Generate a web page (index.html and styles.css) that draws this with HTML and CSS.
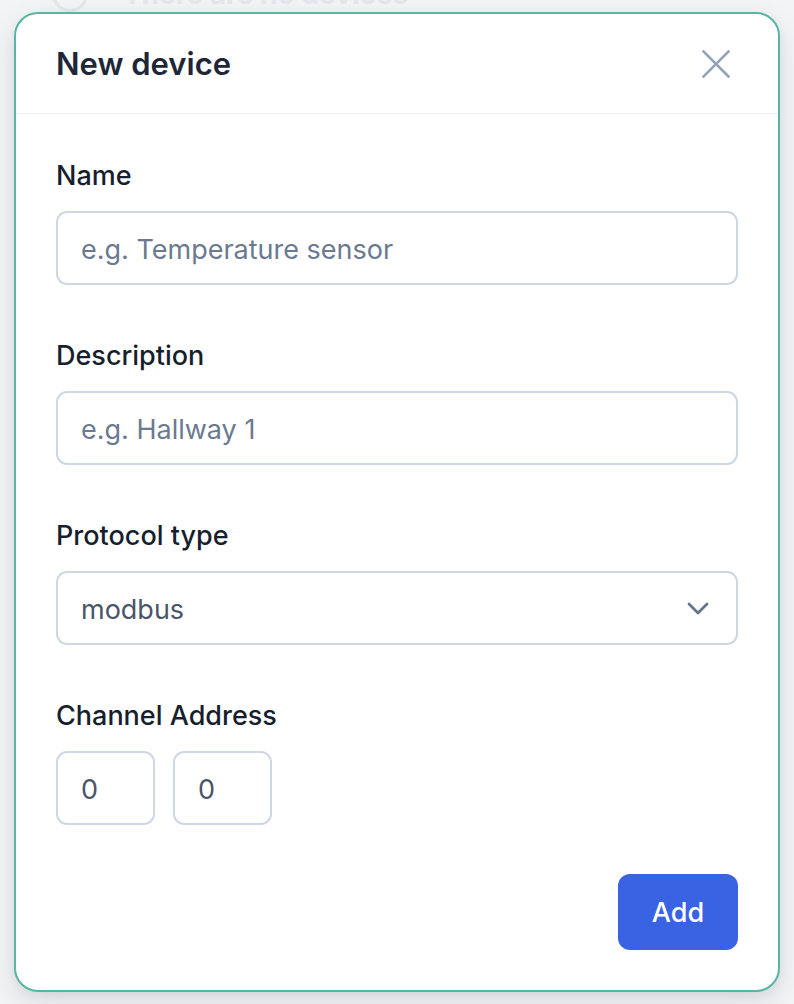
FILE: index.html
```html
<!DOCTYPE html>
<html lang="en">
<head>
<meta charset="utf-8">
<title>New device</title>
<link rel="stylesheet" href="styles.css">
</head>
<body>
<div class="backdrop-content">
  <span class="empty-icon"></span>
  <span class="empty-text">There are no devices</span>
</div>
<div class="modal">
  <header class="modal-header">
    <h2 class="modal-title">New device</h2>
    <button class="close-btn" aria-label="Close">
      <svg width="28" height="28" viewBox="0 0 28 28" fill="none" stroke="#94a3b8" stroke-width="2.6" stroke-linecap="square">
        <path d="M1.5 1.5 L26.5 26.5 M26.5 1.5 L1.5 26.5"/>
      </svg>
    </button>
  </header>
  <div class="modal-body">
    <div class="field">
      <label class="label">Name</label>
      <div class="input placeholder">e.g. Temperature sensor</div>
    </div>
    <div class="field">
      <label class="label">Description</label>
      <div class="input placeholder">e.g. Hallway 1</div>
    </div>
    <div class="field">
      <label class="label">Protocol type</label>
      <div class="input select">
        <span>modbus</span>
        <svg class="chevron" width="22" height="13" viewBox="0 0 22 13" fill="none" stroke="#64748b" stroke-width="2.8" stroke-linecap="round" stroke-linejoin="round">
          <path d="M2 2 L11 11 L20 2"/>
        </svg>
      </div>
    </div>
    <div class="field last">
      <label class="label">Channel Address</label>
      <div class="address-row">
        <div class="input small">0</div>
        <div class="input small">0</div>
      </div>
    </div>
    <div class="footer">
      <button class="add-btn">Add</button>
    </div>
  </div>
</div>
</body>
</html>
```

FILE: styles.css
```css
html, body {
  margin: 0;
  padding: 0;
}
body {
  width: 794px;
  height: 1004px;
  background: #f3f4f6;
  font-family: Inter, "Noto Sans", "Liberation Sans", sans-serif;
  position: relative;
  overflow: hidden;
}
.backdrop-content {
  position: absolute;
  left: 52px;
  top: -24px;
  display: flex;
  align-items: center;
  gap: 35px;
}
.empty-icon {
  width: 30px;
  height: 30px;
  border: 3px solid #e4e7eb;
  border-radius: 50%;
}
.empty-text {
  font-size: 28px;
  font-weight: 700;
  color: #e4e7eb;
}
.modal {
  position: relative;
  margin: 12px 14px 0 14px;
  width: 766px;
  height: 980px;
  box-sizing: border-box;
  background: #ffffff;
  border: 2px solid #55b6a3;
  border-radius: 24px;
  box-shadow: 0 10px 30px rgba(15, 23, 42, 0.10), 0 4px 10px rgba(15, 23, 42, 0.05);
  display: flex;
  flex-direction: column;
}
.modal-header {
  height: 99px;
  border-bottom: 1px solid #eef2f6;
  display: flex;
  align-items: center;
  justify-content: space-between;
  padding: 0 48px 0 40px;
}
.modal-title {
  margin: 0;
  font-size: 31px;
  font-weight: 600;
  color: #1e2738;
}
.close-btn {
  background: none;
  border: 0;
  padding: 0;
  width: 28px;
  height: 28px;
  display: flex;
  align-items: center;
  justify-content: center;
}
.modal-body {
  flex: 1;
  padding: 41px 40px 40px 40px;
  display: flex;
  flex-direction: column;
}
.field {
  display: flex;
  flex-direction: column;
  margin-bottom: 50px;
}
.field.last {
  margin-bottom: 49px;
}
.label {
  height: 40px;
  line-height: 42px;
  font-size: 27px;
  font-weight: 500;
  color: #171f2e;
  margin-bottom: 16px;
}
.input {
  height: 74px;
  box-sizing: border-box;
  border: 2px solid #cfd7e2;
  border-radius: 11px;
  padding: 3px 23px 0 23px;
  display: flex;
  align-items: center;
  font-size: 27px;
  color: #4a5568;
}
.input.placeholder {
  color: #6b7a90;
}
.select {
  justify-content: space-between;
  padding-right: 27px;
}
.chevron {
  display: block;
  margin-top: -3px;
}
.address-row {
  display: flex;
  gap: 18px;
}
.input.small {
  width: 99px;
}
.footer {
  display: flex;
  justify-content: flex-end;
}
.add-btn {
  width: 120px;
  height: 76px;
  border: 0;
  border-radius: 12px;
  background: #3963e3;
  color: #ffffff;
  font-family: Inter, "Noto Sans", "Liberation Sans", sans-serif;
  font-size: 27px;
  font-weight: 500;
  padding-top: 2px;
}
```
